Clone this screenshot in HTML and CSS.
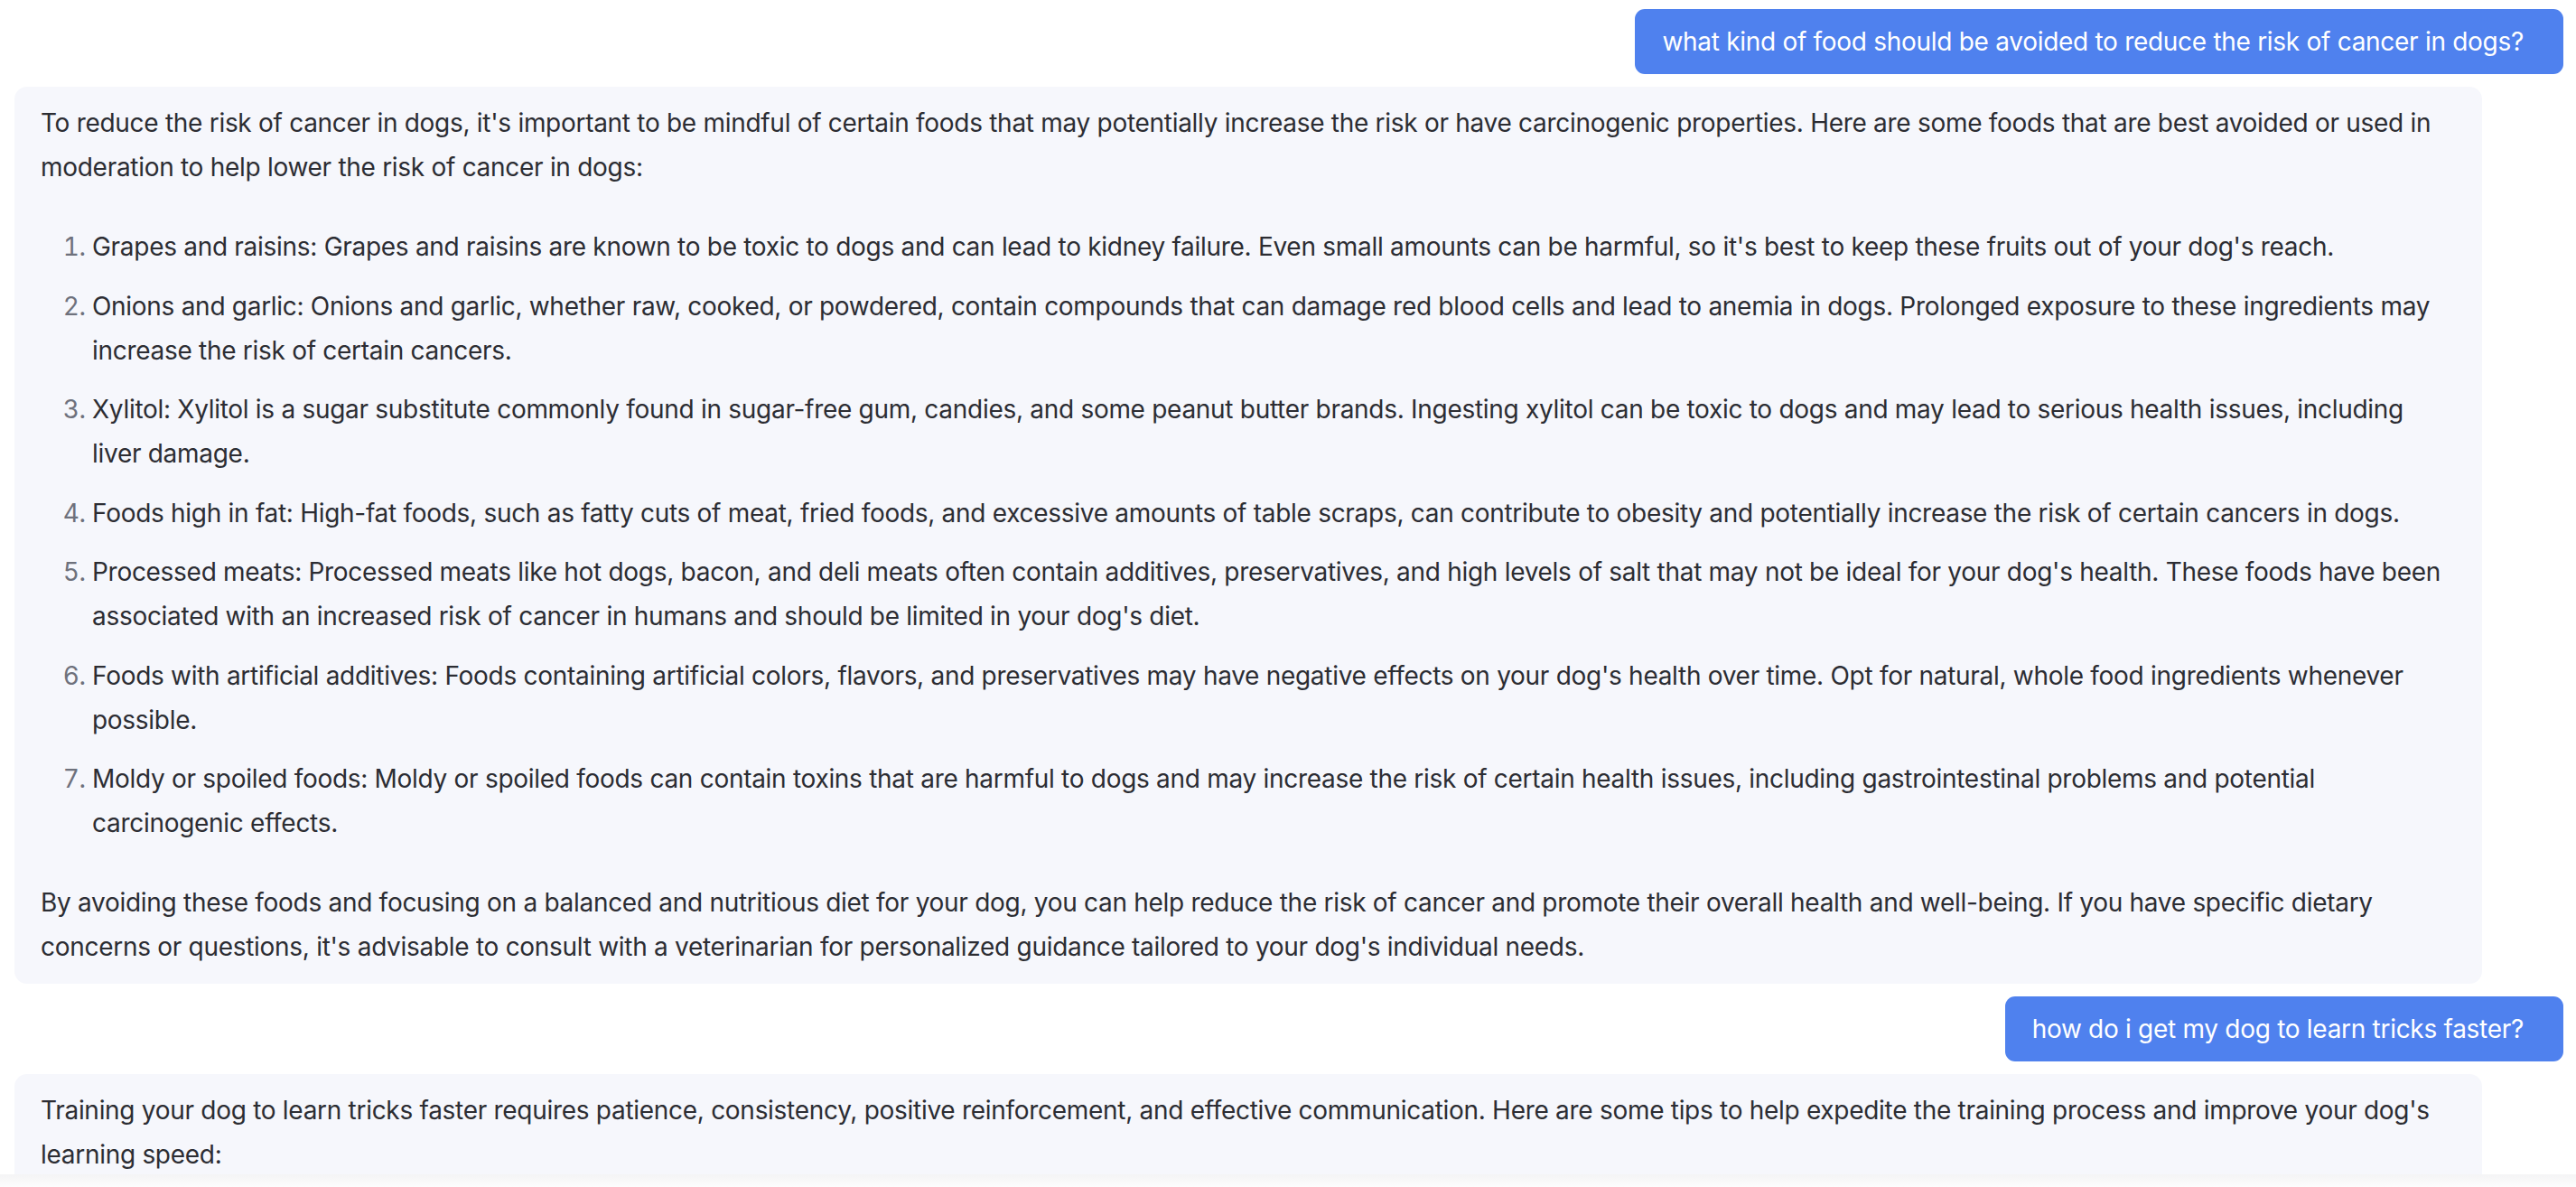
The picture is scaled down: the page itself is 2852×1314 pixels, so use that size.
FILE: index.html
```html
<!DOCTYPE html>
<html lang="en">
<head>
<meta charset="utf-8">
<title>Chat</title>
<link rel="stylesheet" href="styles.css">
</head>
<body>
<div class="chat">
  <div class="msg user"><div class="bubble">what kind of food should be avoided to reduce the risk of cancer in dogs?</div></div>
  <div class="msg bot"><div class="bubble">
    <p>To reduce the risk of cancer in dogs, it's important to be mindful of certain foods that may potentially increase the risk or have carcinogenic properties. Here are some foods that are best avoided or used in moderation to help lower the risk of cancer in dogs:</p>
    <ol>
      <li>Grapes and raisins: Grapes and raisins are known to be toxic to dogs and can lead to kidney failure. Even small amounts can be harmful, so it's best to keep these fruits out of your dog's reach.</li>
      <li>Onions and garlic: Onions and garlic, whether raw, cooked, or powdered, contain compounds that can damage red blood cells and lead to anemia in dogs. Prolonged exposure to these ingredients may increase the risk of certain cancers.</li>
      <li>Xylitol: Xylitol is a sugar substitute commonly found in sugar-free gum, candies, and some peanut butter brands. Ingesting xylitol can be toxic to dogs and may lead to serious health issues, including liver damage.</li>
      <li>Foods high in fat: High-fat foods, such as fatty cuts of meat, fried foods, and excessive amounts of table scraps, can contribute to obesity and potentially increase the risk of certain cancers in dogs.</li>
      <li>Processed meats: Processed meats like hot dogs, bacon, and deli meats often contain additives, preservatives, and high levels of salt that may not be ideal for your dog's health. These foods have been associated with an increased risk of cancer in humans and should be limited in your dog's diet.</li>
      <li>Foods with artificial additives: Foods containing artificial colors, flavors, and preservatives may have negative effects on your dog's health over time. Opt for natural, whole food ingredients whenever possible.</li>
      <li>Moldy or spoiled foods: Moldy or spoiled foods can contain toxins that are harmful to dogs and may increase the risk of certain health issues, including gastrointestinal problems and potential carcinogenic effects.</li>
    </ol>
    <p>By avoiding these foods and focusing on a balanced and nutritious diet for your dog, you can help reduce the risk of cancer and promote their overall health and well-being. If you have specific dietary concerns or questions, it's advisable to consult with a veterinarian for personalized guidance tailored to your dog's individual needs.</p>
  </div></div>
  <div class="msg user"><div class="bubble">how do i get my dog to learn tricks faster?</div></div>
  <div class="msg bot"><div class="bubble">
    <p>Training your dog to learn tricks faster requires patience, consistency, positive reinforcement, and effective communication. Here are some tips to help expedite the training process and improve your dog's learning speed:</p>
  </div></div>
  <div class="fade"></div>
</div>
</body>
</html>
```
FILE: styles.css
```css
* { box-sizing: border-box; }
html, body { margin: 0; padding: 0; background: #ffffff; }
body {
  font-family: Inter, "Noto Sans", "Liberation Sans", sans-serif;
  font-size: 28px;
  line-height: 49px;
  letter-spacing: -0.29px;
  color: #2c2d33;
}
.chat {
  position: relative;
  height: 1314px;
  overflow: hidden;
  padding: 10px 14px 0 16px;
  display: flex;
  flex-direction: column;
  gap: 14px;
}
.msg { display: flex; }
.msg.user { justify-content: flex-end; }
.msg.user .bubble {
  background: #4f81ee;
  color: #ffffff;
  border-radius: 11px;
  padding: 12px 44px 11px 30px;
}
.msg.bot { margin-right: 90px; }
.msg.bot .bubble {
  background: #f6f7fc;
  border-radius: 14px;
  padding: 16px 30px 16px 29px;
  width: 100%;
  min-height: 160px;
}
.bubble p { margin: 0; }
.bubble ol {
  margin: 39px 0;
  padding-left: 57px;
}
.bubble li + li { margin-top: 16.5px; }
.bubble li::marker { color: #6e717c; }
.fade {
  position: absolute;
  left: 0;
  right: 0;
  bottom: 0;
  height: 14px;
  background: linear-gradient(#f4f4f5, #fdfdfd);
}
```
